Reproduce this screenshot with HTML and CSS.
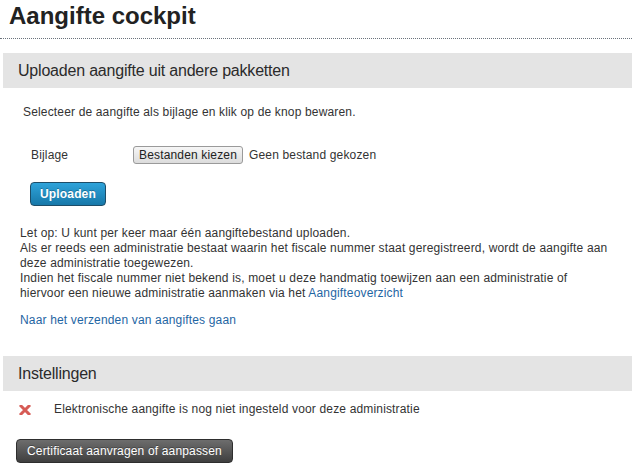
FILE: index.html
```html
<!DOCTYPE html>
<html lang="nl">
<head>
  <meta charset="UTF-8">
  <title>Aangifte cockpit</title>
  <link rel="stylesheet" href="styles.css">
</head>
<body>

<div class="cockpit">
  <h1 class="page-title">Aangifte cockpit</h1>

  <section class="panel">
    <h2 class="panel-head">Uploaden aangifte uit andere pakketten</h2>
    <div class="panel-body upload-body">
      <p class="intro">Selecteer de aangifte als bijlage en klik op de knop bewaren.</p>

      <div class="field-row">
        <span class="field-label">Bijlage</span>
        <span class="file-picker">
          <button class="file-btn" type="button">Bestanden kiezen</button>
          <span class="file-name">Geen bestand gekozen</span>
        </span>
      </div>

      <button class="btn btn-primary" type="button">Uploaden</button>

      <p class="notes">
        Let op: U kunt per keer maar één aangiftebestand uploaden.<br>
        Als er reeds een administratie bestaat waarin het fiscale nummer staat geregistreerd, wordt de aangifte aan deze administratie toegewezen.<br>
        Indien het fiscale nummer niet bekend is, moet u deze handmatig toewijzen aan een administratie of hiervoor een nieuwe administratie aanmaken via het <a href="#">Aangifteoverzicht</a>
      </p>

      <a class="send-link" href="#">Naar het verzenden van aangiftes gaan</a>
    </div>
  </section>

  <section class="panel settings">
    <h2 class="panel-head">Instellingen</h2>
    <div class="status-row">
      <svg class="status-icon" width="12" height="10" viewBox="0 0 12 10">
        <path d="M2 1 L10 9 M10 1 L2 9" stroke="#d65b55" stroke-width="3" stroke-linecap="square"/>
      </svg>
      <span>Elektronische aangifte is nog niet ingesteld voor deze administratie</span>
    </div>
    <button class="btn btn-dark" type="button">Certificaat aanvragen of aanpassen</button>
  </section>
</div>

</body>
</html>
```

FILE: styles.css
```css
body {
  margin: 0;
  font-family: "Liberation Sans", Arial, sans-serif;
  font-size: 12px;
  letter-spacing: 0.16px;
  color: #333;
  background: #fff;
}
.page-title {
  margin: 0;
  height: 39px;
  box-sizing: border-box;
  padding: 2px 9px 0;
  font-size: 24px;
  line-height: 28px;
  font-weight: bold;
  letter-spacing: 0;
  color: #222;
  border-bottom: 1px dotted #6b737c;
}
.panel {
  margin-left: 3px;
}
.panel-head {
  margin: 14px 0 0;
  height: 35px;
  padding: 0 15px;
  background: #e4e4e4;
  font-size: 16px;
  font-weight: normal;
  line-height: 35px;
  letter-spacing: -0.2px;
  color: #2b2b2b;
}
.settings .panel-head {
  margin-top: 28px;
}
.upload-body {
  display: flex;
  flex-direction: column;
  align-items: flex-start;
}
.intro {
  margin: 17px 0 0 20px;
  line-height: 15px;
}
.field-row {
  display: flex;
  align-items: center;
  margin: 26px 0 0 28px;
  height: 18px;
}
.field-label {
  width: 102px;
}
.file-picker {
  display: flex;
  align-items: center;
}
.file-btn {
  height: 18px;
  padding: 0 5px;
  font-family: inherit;
  font-size: 12px;
  letter-spacing: inherit;
  color: #222;
  background: linear-gradient(#f6f6f6, #dcdcdc);
  border: 1px solid #9a9a9a;
  border-radius: 3px;
}
.file-name {
  margin-left: 6px;
}
.btn {
  height: 24px;
  font-family: inherit;
  font-size: 12px;
  letter-spacing: inherit;
  color: #fff;
  border-radius: 4px;
  cursor: pointer;
}
.btn-primary {
  margin: 18px 0 0 27px;
  padding: 0 9px;
  font-weight: bold;
  background: linear-gradient(#2ea3da, #1778a9);
  border: 1px solid #1d4d68;
  text-shadow: 0 -1px 0 rgba(0, 0, 0, 0.25);
}
.notes {
  margin: 20px 17px 0 17px;
  line-height: 15px;
}
a {
  color: #1f66a3;
  text-decoration: none;
}
.send-link {
  display: block;
  margin: 12px 0 0 17px;
  line-height: 15px;
}
.status-row {
  display: flex;
  align-items: center;
  margin: 11px 0 0 16px;
  line-height: 15px;
}
.status-icon {
  margin-right: 23px;
}
.btn-dark {
  margin: 22px 0 0 13px;
  padding: 0 10px;
  background: linear-gradient(#6d6d6d, #3f3f3f);
  border: 1px solid #2e2e2e;
  text-shadow: 0 -1px 0 rgba(0, 0, 0, 0.3);
}
```
